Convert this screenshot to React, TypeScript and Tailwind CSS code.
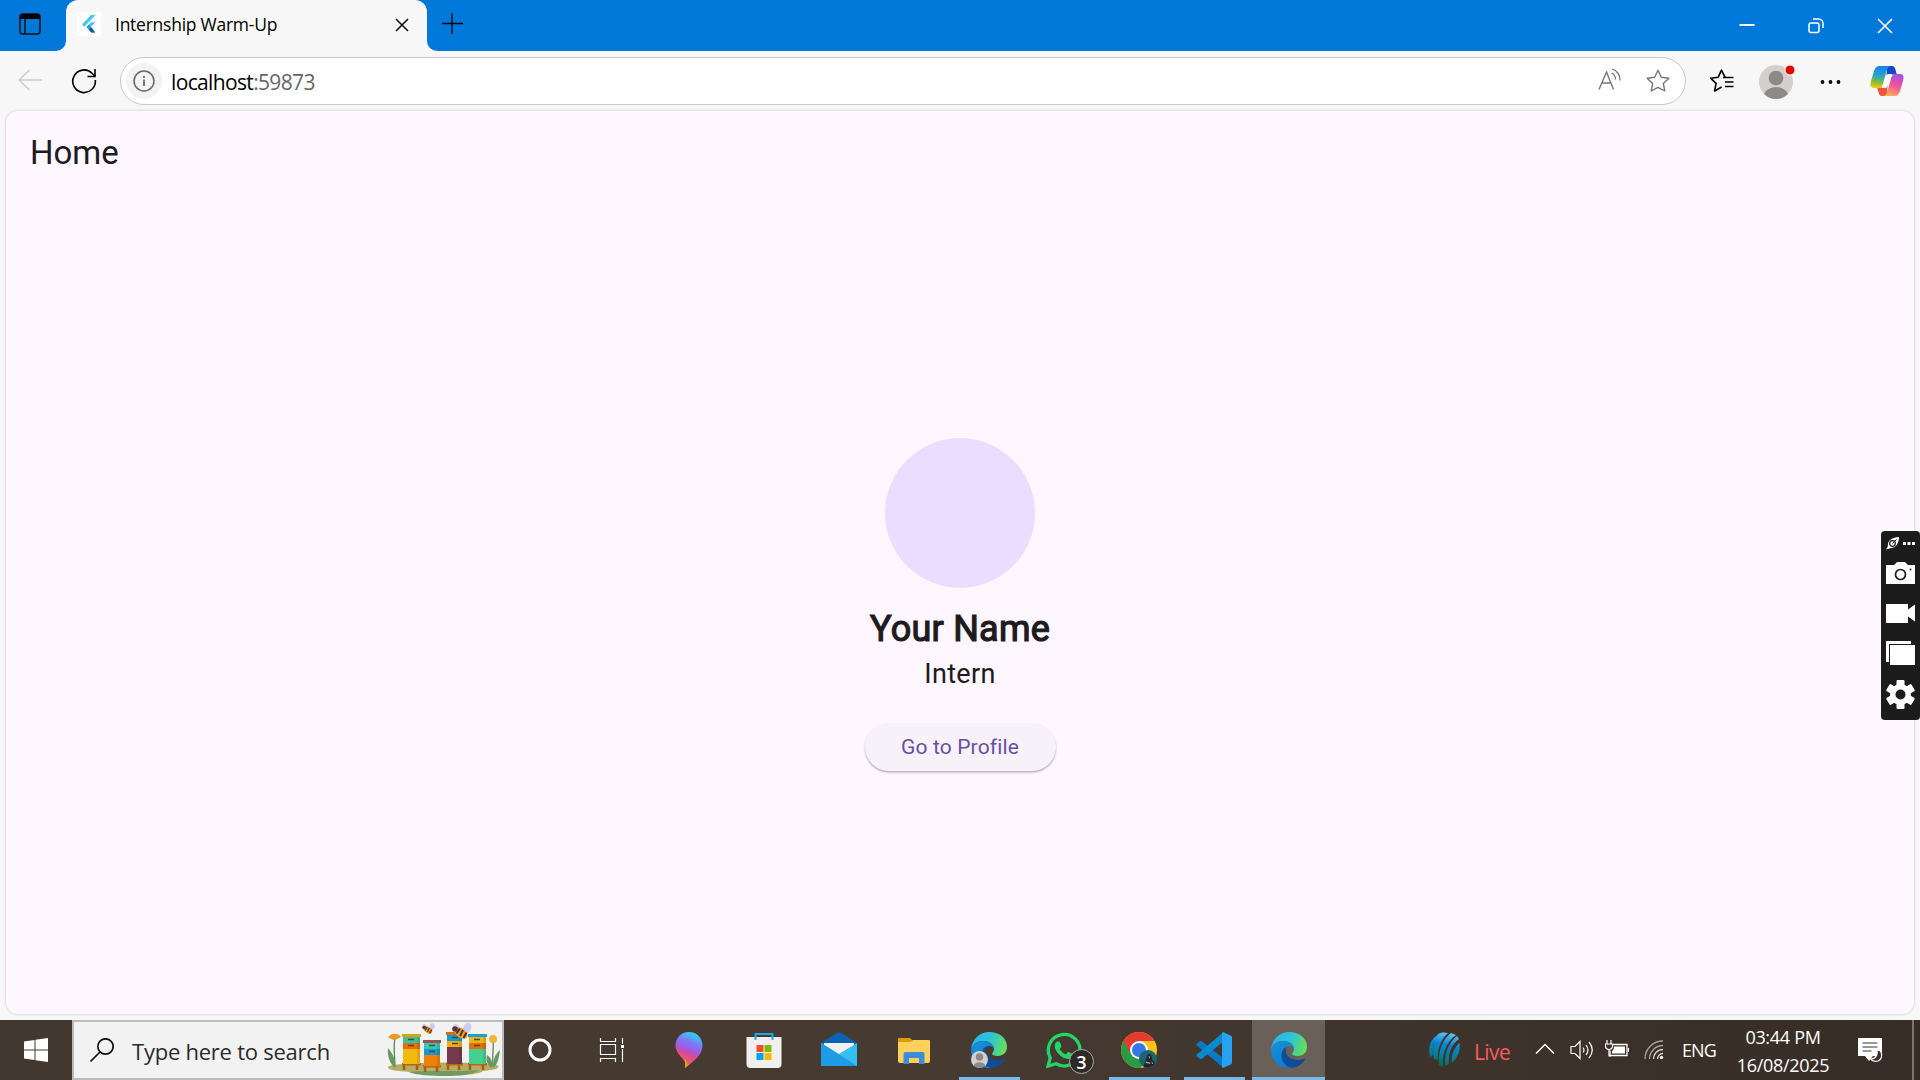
import React from "react";

type P = { children?: React.ReactNode; w: number; h: number; className?: string };
const Svg = ({ children, w, h, className = "" }: P) => (
  <svg width={w} height={h} viewBox={`0 0 ${w} ${h}`} fill="none" className={`shrink-0 ${className}`}>
    {children}
  </svg>
);

const STAR = "M12 1.2l3.3 7 7.6 1-5.6 5.2 1.5 7.6-6.8-3.7-6.8 3.7 1.500-7.6L1.1 9.2l7.6-1z";

const EdgeLogo = ({ id }: { id: string }) => (
  <Svg w={36} h={36}>
    <defs>
      <linearGradient id={`${id}a`} x1="0" y1="0.4" x2="1" y2="0.6">
        <stop offset="0" stopColor="#2fb0ee" />
        <stop offset="0.5" stopColor="#2cc4d8" />
        <stop offset="1" stopColor="#6be04f" />
      </linearGradient>
      <linearGradient id={`${id}b`} x1="0" y1="0" x2="0.6" y2="1">
        <stop offset="0" stopColor="#1593d6" />
        <stop offset="1" stopColor="#0b7bdc" />
      </linearGradient>
      <linearGradient id={`${id}c`} x1="0" y1="0" x2="1" y2="0.3">
        <stop offset="0" stopColor="#0c4f94" />
        <stop offset="1" stopColor="#114a98" />
      </linearGradient>
    </defs>
    <path d="M0 17C1 7 9 0 18 0c10 0 18 6 18 14.500C36 20.500 32 24 27 24c-4 0-6-1-6-2.200 0-1 2-1.800 2-4.800C23 12.500 18 9 12 9 6 9 2 12 0 17z" fill={`url(#${id}a)`} />
    <path d="M0 18C1 12.500 6 9 12 9c6.500 0 11 4 11 8.500-.5-2-2.500-3.500-5-3.500-4 0-7.500 4-7.500 9 0 6 4 11 10 12.800C9 37.500 0 29 0 18z" fill={`url(#${id}b)`} />
    <path d="M14.500 15c-2.500 2-4 5-4 8.500 0 6.500 5 12.500 11.500 12.200 5-.7 9.500-4 12-8 .5-1-.3-1.400-1-1-8 3.500-18.500-.7-18.500-9z" fill={`url(#${id}c)`} />
  </Svg>
);

const Hive = ({ x, y, h, w, c }: { x: number; y: number; h: number; w: number; c: string[] }) => (
  <g>
    <path d={`M${x + 1} ${y + h}v6M${x + w - 3} ${y + h}v6`} stroke="#a55a16" strokeWidth="2.500" />
    <rect x={x - 1} y={y + h - 1} width={w + 2} height="2.500" fill="#b8651a" />
    <rect x={x} y={y} width={w} height={h} fill={c[3]} />
    <rect x={x} y={y + 2} width={w} height="7" fill={c[1]} />
    <rect x={x} y={y + 9} width={w} height="6" fill={c[2]} />
    <rect x={x - 1} y={y} width={w + 2} height="3" fill={c[0]} />
    <rect x={x + w - 3} y={y + 3} width="3" height={h - 3} fill="#00000018" />
    <path d={`M${x + 5} ${y + 5.5}h6M${x + 5} ${y + 11.5}h6`} stroke="#59422f" strokeWidth="1.500" />
  </g>
);

const Bee = () => (
  <g>
    <ellipse cx="-2" cy="-6" rx="3" ry="5" transform="rotate(-25)" fill="#d5d0f2" />
    <ellipse cx="3.500" cy="-7" rx="4" ry="5.500" transform="rotate(25)" fill="#cfc9f3" />
    <ellipse rx="7.500" ry="4.500" transform="rotate(35)" fill="#e8a52b" />
    <path d="M-1-4.500l-3.500 5M2-3l-3 6M5.500-.5l-3 5.500" stroke="#4b3036" strokeWidth="2" />
    <circle cx="-6" cy="-4" r="2.800" fill="#57363b" />
  </g>
);

const Beehives = () => (
  <Svg w={114} h={56} className="ml-auto">
    <path d="M2 44c10-4 96-5 108-1 5 4-4 5-14 6-4 3-14 4-28 4s-38-1-46-3C8 49-2 48 2 44z" fill="#b5ae62" />
    <path d="M22 50c14-2 50 0 70-2-6 5-20 6-34 6s-30-1-36-4z" fill="#749a63" />
    <path d="M8 45C8 34 6 26 8 16M106 44c-1-11 1-18 0-27" stroke="#5b8752" strokeWidth="1.300" />
    <path d="M8 46c-5-4-8-12-7-20 5 6 8 12 7 20zM105 46c-6-3-6-9-5-13 4 2 6 7 5 13zM106 46c0-8 2-14 7-18-1 8-2 14-7 18z" fill="#6a9862" />
    <path d="M1 16c2-5 10-6 13-1-3 1-5 3-7 3s-3-2-6-2z" fill="#e99a25" />
    <circle cx="106" cy="17" r="4" fill="#f2b632" />
    <Hive x={16} y={12} w={17} h={30} c={["#d8a400", "#35c4a2", "#e3700c", "#f4b90d"]} />
    <Hive x={37} y={18} w={16} h={26} c={["#a04b5c", "#35cba8", "#1797d8", "#ee8207"]} />
    <Hive x={60} y={10} w={15} h={32} c={["#dc6a13", "#1599d2", "#f0ac12", "#74394b"]} />
    <Hive x={82} y={12} w={17} h={30} c={["#16a1cf", "#efb415", "#e3720c", "#45d08f"]} />
    <g transform="translate(41 8) scale(.65)"><Bee /></g>
    <g transform="translate(74 11)"><Bee /></g>
  </Svg>
);

const TaskCell = ({ children, open, active }: { children: React.ReactNode; open?: boolean; active?: boolean }) => (
  <div className={`relative flex h-full w-[75px] shrink-0 items-center justify-center ${active ? "bg-[#6a6058]" : ""}`}>
    {children}
    {open && <div className="absolute bottom-0 left-[8px] h-[3px] w-[61px] bg-[#76b9ed]" />}
    {active && <div className="absolute bottom-0 left-0 h-[3px] w-full bg-[#76b9ed]" />}
  </div>
);

const TitleBar = () => (
  <div className="flex h-[51px] shrink-0 bg-[#0078d9]">
    <div className="flex w-[66px] items-center justify-center pr-[6px]">
      <Svg w={22} h={22} className="-mt-[3px]">
        <rect x="1" y="1" width="20" height="20" rx="3" stroke="#111" strokeWidth="1.500" />
        <path d="M1 6V4a3 3 0 013-3h14a3 3 0 013 3v2z" fill="#000" />
        <path d="M6 6v15" stroke="#111" strokeWidth="1.500" />
      </Svg>
    </div>
    <div className="relative flex w-[361px] rounded-t-[12px] bg-[#f7f7f7] pl-[11px] pr-[18px]">
      <svg width="10" height="10" className="absolute -left-[10px] bottom-0"><path d="M10 0A10 10 0 010 10h10z" fill="#f7f7f7" /></svg>
      <svg width="10" height="10" className="absolute -right-[10px] bottom-0"><path d="M0 0a10 10 0 0010 10H0z" fill="#f7f7f7" /></svg>
      <Svg w={24} h={24} className="mt-[12px] bg-white">
        <path d="M5 12.500L14 3H18.500L7.300 14.700zM9.500 15l4.500-4.700h4.300L13.800 15l4.500 5.500H14z" fill="#43c5f8" />
        <path d="M9.500 15l2.200-2.200 4.500 4.700-2 2.200z" fill="#2697df" />
        <path d="M12 17.800l2-2.500 4.300 5.200H14.500z" fill="#14559e" />
      </Svg>
      <span className="ml-[14px] mt-[10px] whitespace-nowrap font-['Open_Sans'] text-[17.500px] leading-[28px] tracking-[-0.25px] text-black">Internship Warm-Up</span>
      <Svg w={14} h={14} className="ml-auto mt-[18px]"><path d="M1 1l12 12M13 1L1 13" stroke="#111" strokeWidth="1.600" /></Svg>
    </div>
    <Svg w={22} h={22} className="ml-[14px] mt-[12px]"><path d="M11 1v21M1 11.500h21" stroke="#000" strokeWidth="1.300" /></Svg>
    <div className="ml-auto mr-px flex">
      <div className="flex w-[69px] justify-center"><Svg w={16} h={16} className="mt-[17px]"><path d="M.5 8h15" stroke="#fff" strokeWidth="2" /></Svg></div>
      <div className="flex w-[69px] justify-center">
        <Svg w={16} h={16} className="mt-[18px]">
          <rect x="1" y="5" width="10" height="9.500" rx="2" stroke="#fff" strokeWidth="1.500" />
          <path d="M5 1h5.500A4.500 4.500 0 0115 5.500V10" stroke="#fff" strokeWidth="1.500" />
        </Svg>
      </div>
      <div className="flex w-[69px] justify-center"><Svg w={16} h={16} className="mt-[18px]"><path d="M1 1l14 14M15 1L1 15" stroke="#fff" strokeWidth="1.600" /></Svg></div>
    </div>
  </div>
);

const Toolbar = () => (
  <div className="flex h-[60px] shrink-0 items-center">
    <div className="flex w-[60px] justify-center"><Svg w={24} h={22} className="-mt-[2px]"><path d="M24 11H1M11.500 1L1 11l10.500 10" stroke="#ccc" strokeWidth="1.500" /></Svg></div>
    <div className="flex w-[48px] justify-center">
      <Svg w={26} h={26}>
        <path d="M24.300 12A11.300 11.300 0 1121 5.200l3 3" stroke="#000" strokeWidth="1.600" />
        <path d="M24 1v7.500h-7.500" stroke="#000" strokeWidth="1.600" />
      </Svg>
    </div>
    <div className="ml-[12px] flex h-[48px] w-[1566px] items-center rounded-full border border-[#c9c9c9] bg-white pl-[5px]">
      <div className="flex h-[36px] w-[36px] items-center justify-center rounded-full bg-[#f3f3f3]">
        <Svg w={22} h={22}><circle cx="11" cy="11" r="10" stroke="#666" strokeWidth="1.500" /><path d="M11 9.500V16" stroke="#666" strokeWidth="1.700" /><circle cx="11" cy="7" r="1.100" fill="#666" /></Svg>
      </div>
      <span className="ml-[9px] mt-px whitespace-nowrap font-['Open_Sans'] text-[21px] leading-[28px] tracking-[-0.65px] text-black">
        localhost<span className="text-[#666]">:59873</span>
      </span>
      <Svg w={24} h={22} className="ml-auto -mt-[4px]">
        <path d="M1 21.500L8.500 4 15.500 21.500M3.500 15h10" stroke="#767676" strokeWidth="1.400" />
        <path d="M13.500 5c2.500 1 4 3.500 4 6.500M14 1c5 1.500 8.500 6 8 11.500" stroke="#767676" strokeWidth="1.300" />
      </Svg>
      <Svg w={24} h={24} className="ml-[24px] mr-[15px]"><path d={STAR} stroke="#767676" strokeWidth="1.400" strokeLinejoin="round" /></Svg>
    </div>
    <Svg w={26} h={24} className="ml-[23px]">
      <path d="M14 8.500h10.500M16 13h8.500M16 17.500h8.500" stroke="#000" strokeWidth="1.600" />
      <path d="M16 8.200L12.500 1.200 9.200 8.200l-7.600 1 5.500 5.200L5.600 22l7-4" stroke="#000" strokeWidth="1.600" strokeLinejoin="round" />
    </Svg>
    <Svg w={38} h={38} className="-mt-px ml-[24px]">
      <clipPath id="av"><circle cx="17" cy="20" r="17" /></clipPath>
      <g clipPath="url(#av)"><rect width="38" height="38" fill="#d2d0ce" /><circle cx="17" cy="16" r="7.300" fill="#8d8986" /><ellipse cx="17" cy="35" rx="12.500" ry="10" fill="#8d8986" /></g>
      <circle cx="31" cy="8" r="5" fill="#e60000" stroke="#f7f7f7" />
    </Svg>
    <Svg w={22} h={6} className="ml-[22px]"><g fill="#000"><circle cx="3.500" cy="4" r="1.900" /><circle cx="11.500" cy="4" r="1.900" /><circle cx="19.500" cy="4" r="1.900" /></g></Svg>
    <Svg w={34} h={32} className="ml-[29px]">
      <defs>
        <linearGradient id="cp1" x1="0.500" y1="0" x2="0.350" y2="1"><stop stopColor="#1685e8" /><stop offset=".4" stopColor="#249fd0" /><stop offset=".7" stopColor="#6fbb4c" /><stop offset="1" stopColor="#f8cc00" /></linearGradient>
        <linearGradient id="cp2" x1="0.700" y1="0" x2="0.400" y2="1"><stop stopColor="#a44fe6" /><stop offset=".5" stopColor="#ee5298" /><stop offset="1" stopColor="#ffa85a" /></linearGradient>
      </defs>
      <path d="M17 1h5c3.500 0 3.500 5 5 8.500h-7c-2 0-3 1-3.500 3z" fill="#1546c8" />
      <path d="M17 31h-5c-3.500 0-3.500-5-5-8.500h7c2 0 3-1 3.500-3z" fill="#f0553a" />
      <path d="M9.500 1H21c-3 0-3.800 3-4.700 6l-3.500 12c-.9 3-2 4-4.800 4H4c-4 0-4-3-3-7L4 6c1-3 2.500-5 5.500-5z" fill="url(#cp1)" />
      <path d="M24.500 31H13c3 0 3.800-3 4.700-6l3.500-12c.9-3 2-4 4.800-4h4c4 0 4 3 3 7l-3 10c-1 3-2.500 5-5.500 5z" fill="url(#cp2)" />
      <path d="M16 10.500q.8-1.500 2.500-1.500H22q-1.500 1.500-2 3.500l-2.500 8.500q-.7 2-2.500 2h-3q1.500-1.500 2-3.500z" fill="#fafafa" />
    </Svg>
  </div>
);

const Page = () => (
  <div className="mx-[6px] flex h-[903px] shrink-0 flex-col rounded-[12px] bg-[#fef7ff] shadow-[0_0_2px_1px_#dedede] font-[Roboto] text-[#1d1b20]">
    <div className="flex h-[84px] items-center pl-[24px] text-[33px]">Home</div>
    <div className="flex h-[819px] flex-col items-center justify-center">
      <div className="h-[150px] w-[150px] rounded-full bg-[#eaddff]" />
      <div className="mt-[17px] h-[48px] text-[36px] leading-[48px] tracking-[0.25px] [-webkit-text-stroke:1.2px_#1d1b20]">Your Name</div>
      <div className="mt-[3px] h-[36px] text-[27px] leading-[36px] tracking-[0.35px]">Intern</div>
      <button className="mt-[31px] h-[48px] w-[191px] rounded-full bg-[#f7f2fa] pt-[2px] text-[21px] tracking-[0.15px] text-[#6750a4] shadow-[0_1.500px_2px_rgba(0,0,0,0.300)]">Go to Profile</button>
    </div>
  </div>
);

const Taskbar = () => (
  <div className="mt-auto flex h-[60px] shrink-0 items-center bg-linear-to-r from-[#43382f] via-[#463a31] to-[#372d26] font-['Open_Sans'] text-white">
    <div className="flex w-[72px] justify-center">
      <Svg w={24} h={24}><path d="M0 3.500L10.500 2v9.500H0zM11.500 1.800L24 0v11.500H11.500zM0 12.500h10.500V22L0 20.500zM11.500 12.500H24V24l-12.500-1.800z" fill="#fff" /></Svg>
    </div>
    <div className="flex h-full w-[432px] items-center border-2 border-[#bcbcbc] bg-[#f2f2f2] pl-[16px] pr-px">
      <Svg w={24} h={25}><circle cx="15.500" cy="8.500" r="7.700" stroke="#111" strokeWidth="1.700" /><path d="M10 14L.5 23.500" stroke="#111" strokeWidth="1.700" /></Svg>
      <span className="ml-[18px] mt-[3px] whitespace-nowrap text-[22px] tracking-[-0.24px] text-[#2b2b2b]">Type here to search</span>
      <Beehives />
    </div>
    <div className="flex w-[72px] justify-center"><Svg w={24} h={24}><circle cx="12" cy="12" r="10" stroke="#fff" strokeWidth="3" /></Svg></div>
    <div className="flex w-[72px] justify-center">
      <Svg w={26} h={24}><path d="M1.500 0v3.500h15V0M1.500 24v-3.500h15V24M1.500 6.500h15v10h-15zM23.500 0v6M23.500 11v13" stroke="#fff" strokeWidth="1.200" /><rect x="22" y="7" width="3" height="3" fill="#fff" /></Svg>
    </div>
    <div className="w-[3px]" />
    <TaskCell>
      <Svg w={28} h={36}>
        <defs>
          <linearGradient id="p3" x1=".7" y1="0" x2=".4" y2="1"><stop stopColor="#1fe0f5" /><stop offset=".3" stopColor="#7a7cf7" /><stop offset=".5" stopColor="#a05be0" /><stop offset=".65" stopColor="#dc4c90" /><stop offset=".85" stopColor="#ee5a6a" /><stop offset="1" stopColor="#f2b100" /></linearGradient>
        </defs>
        <path d="M14 0c8 0 13.500 6 13.500 13.500C27.500 23 19 29 10 36c1-6-1-8-4-11C3 22 .5 18 .5 13.500.5 6 6 0 14 0z" fill="url(#p3)" />
        <path d="M9.500 27c3 2 3 5 .5 9 .5-4 .5-6-.5-9z" fill="#f2a900" />
      </Svg>
    </TaskCell>
    <TaskCell>
      <Svg w={36} h={36}>
        <path d="M.5 5h35v27a4 4 0 01-4 4h-27a4 4 0 01-4-4z" fill="#f1f0ef" />
        <path d="M9.500 8V2h17v6" stroke="#1ba6ee" strokeWidth="2" />
        <path d="M10.500 13h7v7h-7z" fill="#f25022" /><path d="M18.500 13h7v7h-7z" fill="#7fba00" /><path d="M10.500 21h7v7h-7z" fill="#00a4ef" /><path d="M18.500 21h7v7h-7z" fill="#ffb900" />
      </Svg>
    </TaskCell>
    <TaskCell>
      <Svg w={36} h={34} className="-mt-[2px]">
        <path d="M0 11L15 1.500a5 5 0 016 0L36 11v8H0z" fill="#0964b8" /><path d="M3 11h30v14H3z" fill="#f1f1f1" />
        <path d="M0 11l18 11 18-11v23H0z" fill="#33bff0" /><path d="M0 11l36 23H0z" fill="#1c9de6" />
      </Svg>
    </TaskCell>
    <TaskCell>
      <Svg w={32} h={27}>
        <path d="M0 2a1 1 0 011-1h11l3 3v4H0z" fill="#df9b05" /><path d="M0 5h12l3-2h16a1 1 0 011 1v20a2 2 0 01-2 2H2a2 2 0 01-2-2z" fill="#ffd15c" />
        <path d="M5.500 27V17a2 2 0 012-2h17a2 2 0 012 2v10H21v-6H11v6z" fill="#398fdb" />
      </Svg>
    </TaskCell>
    <TaskCell open>
      <EdgeLogo id="e1" />
      <Svg w={17} h={17} className="absolute left-[20px] top-[31px]">
        <clipPath id="av2"><circle cx="8.500" cy="8.500" r="8.500" /></clipPath>
        <g clipPath="url(#av2)"><rect width="17" height="17" fill="#d2d0ce" /><circle cx="8.500" cy="6" r="3.800" fill="#8d8986" /><ellipse cx="8.500" cy="16" rx="6" ry="4.800" fill="#8d8986" /></g>
      </Svg>
    </TaskCell>
    <TaskCell>
      <Svg w={36} h={36}>
        <path d="M2 34l2.300-8.200A15.800 15.800 0 1110 31.700z" stroke="#25d366" strokeWidth="3.300" />
        <path d="M12.500 9.500c.8 0 1.200.2 1.500 1l1.400 3.300c.2.600 0 1-.3 1.500L13.700 17c1.500 2.600 3.400 4.300 6 5.500l1.800-2c.5-.6 1-.6 1.500-.4l3.400 1.700c.7.300.8.700.6 1.700-.6 2.400-2.600 3.500-5 3.500C16 26.800 8.700 19.500 8.700 14c0-2 1-4 2.500-4.500z" fill="#25d366" />
      </Svg>
      <div className="absolute left-[43px] top-[29px] flex h-[25px] w-[25px] items-center justify-center rounded-full border border-[#aaa] bg-[#2d2a27] text-[18px] font-semibold leading-none">3</div>
    </TaskCell>
    <TaskCell open>
      <Svg w={36} h={36}>
        <clipPath id="ch"><circle cx="18" cy="18" r="18" /></clipPath>
        <g clipPath="url(#ch)"><rect width="36" height="36" fill="#fbc316" /><path d="M18 9h20V-2H-2v11l12.200 13.500z" fill="#e53b2e" /><path d="M2.400 9l7.800 13.500L18 27h7.800L18 38H-4V9z" fill="#2b9a46" /></g>
        <circle cx="18" cy="18" r="9" fill="#fff" /><circle cx="18" cy="18" r="7" fill="#3478e8" />
        <circle cx="27" cy="27" r="9" fill="#17676f" />
        <path d="M22.500 34.500c1-3 2-6 3-8 .3-3 1.500-4.500 3.200-4.500 2 .5 2.300 3 2.300 5l3 4c-2 4-7 6-11.500 3.500z" fill="#23242e" />
        <path d="M27.500 24c1.700-.3 2 1.500 1 2.800zM25 29.500l4.500 1.200-.5 1.300-4.500-1.200zM30.500 29l1.800 2.500-1.200.8z" fill="#c79b8a" />
      </Svg>
    </TaskCell>
    <TaskCell open>
      <Svg w={36} h={36}>
        <path d="M1 11.500l3-2.300c.6-.4 1.200-.4 1.800 0L27 26v9.500L.8 13.500a1.300 1.300 0 01.2-2z" fill="#0879c4" />
        <path d="M1 24.500l3 2.300c.6.400 1.200.4 1.800 0L27 10V.5L.8 22.500a1.300 1.300 0 00.2 2z" fill="#078bd0" />
        <path d="M27 0l7.500 3.500c1 .4 1.500 1 1.500 2v25c0 1-.5 1.600-1.500 2L27 36c-.7-.5-1-1-1-2V2c0-1 .3-1.500 1-2z" fill="#26a3f0" />
      </Svg>
    </TaskCell>
    <div className="relative -ml-px mr-auto h-full w-[75px]" >
      <div className="ml-[2px] flex h-full w-[73px] items-center justify-center border-b-[3px] border-[#76b9ed] bg-[#6a6058] pt-[3px]"><EdgeLogo id="e2" /></div>
    </div>
    <div className="flex h-full items-center">
      <Svg w={32} h={36}>
        <defs><linearGradient id="icc" x1=".6" y1="0" x2=".4" y2="1"><stop stopColor="#5fc4ef" /><stop offset=".35" stopColor="#0b84d2" /><stop offset=".7" stopColor="#087d91" /><stop offset="1" stopColor="#086b42" /></linearGradient></defs>
        <path d="M10 3C2 7 0 16 2 25l3-2c-1-8 1-15 5-20zM20 1c-4-1-8-.5-10 1-5 7-6 17-4 25l4 1C9 18 13 7 20 1zM28 3l-5-2C14 8 10 19 11 33l4 2C14 22 18 10 28 3zM31 7l-2-3C20 11 16 23 17 34l4-2C20 22 23 13 31 7zM31.500 11c1 8-2 15-7.500 20-1-8 2-15 7.500-20z" fill="url(#icc)" />
      </Svg>
      <span className="ml-[14px] w-[53px] pt-[3px] text-[21px] leading-[28px] tracking-[-0.6px] text-[#f65a60]">Live</span>
      <div className="flex w-[36px] justify-center"><Svg w={20} h={12} className="-mt-[2px]"><path d="M1 10.500L10 1.500l9 9" stroke="#fff" strokeWidth="1.400" /></Svg></div>
      <div className="flex w-[36px] justify-center">
        <Svg w={24} h={20}><path d="M2 6.500h4l5-5v17l-5-5H2z" stroke="#fff" strokeWidth="1.200" /><path d="M14 7.500q2 2.500 0 5M17 5q4 5 0 10M20 2q6.500 8 0 16" stroke="#fff" strokeWidth="1.200" /></Svg>
      </div>
      <div className="flex w-[36px] justify-center">
        <Svg w={24} h={18} className="-mt-[2px]"><path d="M8 4.500h14v11H5v-5" stroke="#fff" strokeWidth="1.300" /><path d="M9 6.500h11v7H7V11c1.500-1 2-2.500 2-4.500z" fill="#fff" /><path d="M23.500 8v4" stroke="#fff" /><path d="M2 0v4M6 0v4M.5 4h7v2A3.300 3.300 0 014 9.500 3.300 3.300 0 01.5 6zM4 9.500V16h2" stroke="#fff" strokeWidth="1.200" /></Svg>
      </div>
      <div className="flex w-[38px] justify-center">
        <Svg w={20} h={20}><path d="M1 19C1 9 9 1 19 1M5.500 19C5.500 11.500 11.500 5.500 19 5.500" stroke="#aaa49f" strokeWidth="1.300" /><path d="M9.500 19c0-5.500 4-9.500 9.500-9.500M13.500 19c0-3 2.500-5.500 5.500-5.500" stroke="#ddd" strokeWidth="1.300" /><circle cx="17.500" cy="17.500" r="1.700" fill="#fff" /></Svg>
      </div>
      <span className="flex w-[52px] justify-center pt-px text-[18px] tracking-[-0.8px]">ENG</span>
      <div className="-ml-px mr-px flex w-[118px] flex-col items-center pt-px text-[18px] leading-[28px] tracking-[-0.300px]"><span>03:44 PM</span><span>16/08/2025</span></div>
      <div className="flex w-[54px] justify-center">
        <Svg w={26} h={26}><path d="M1 1h24v18H16l-4 5-4-5H1z" fill="#fff" /><path d="M5.500 6h15M5.500 10h15M5.500 14h9" stroke="#3a3029" strokeWidth="1.200" /><path d="M20 13c6 0 6 9 1 11-4 1-6 0-7.500-2 5 0 7.500-4 6.500-9z" fill="#3a3029" stroke="#fff" strokeWidth="1.200" /></Svg>
      </div>
      <div className="ml-[15px] mr-[6px] h-full w-[2px] bg-[#7d756f]" />
    </div>
  </div>
);

const CapturePanel = () => (
  <div className="absolute right-0 top-[531px] h-[189px] w-[39px] rounded-[4px] bg-[#1c1c1c]">
    <Svg w={39} h={189}>
      <path d="M7 15c-1-5 4-9 11-9 0 6-3 11-8 11l-5 1.500z" fill="#fff" /><circle cx="11.500" cy="12.500" r="2.800" stroke="#1c1c1c" strokeWidth="1.200" /><path d="M11.500 12.500l4-4" stroke="#1c1c1c" />
      <path d="M22 11h3v3h-3zM26.500 11h3v3h-3zM31 11h3v3h-3z" fill="#fff" />
      <path d="M5 34h8l3-3h8l3 3h7v19H5z" fill="#fff" /><circle cx="19.500" cy="43.500" r="5" stroke="#1c1c1c" strokeWidth="1.700" /><circle cx="29.500" cy="38.500" r="1" fill="#1c1c1c" />
      <path d="M5 73h22v5.500l7-5v17l-7-5V92H5z" fill="#fff" />
      <path d="M5 110h25v3H8v18H5zM9 114h25v20H9z" fill="#fff" />
      <g transform="translate(19.500 163.500)"><g fill="#fff"><circle r="10.500" /><rect x="-4" y="-14.500" width="8" height="29" rx="1" /><rect x="-4" y="-14.500" width="8" height="29" rx="1" transform="rotate(60)" /><rect x="-4" y="-14.500" width="8" height="29" rx="1" transform="rotate(120)" /></g><circle r="5" fill="#1c1c1c" /></g>
    </Svg>
  </div>
);

export default function App() {
  return (
    <div className="relative flex h-[1080px] w-[1920px] flex-col overflow-hidden bg-[#f7f7f7]">
      <TitleBar />
      <Toolbar />
      <Page />
      <Taskbar />
      <CapturePanel />
    </div>
  );
}
